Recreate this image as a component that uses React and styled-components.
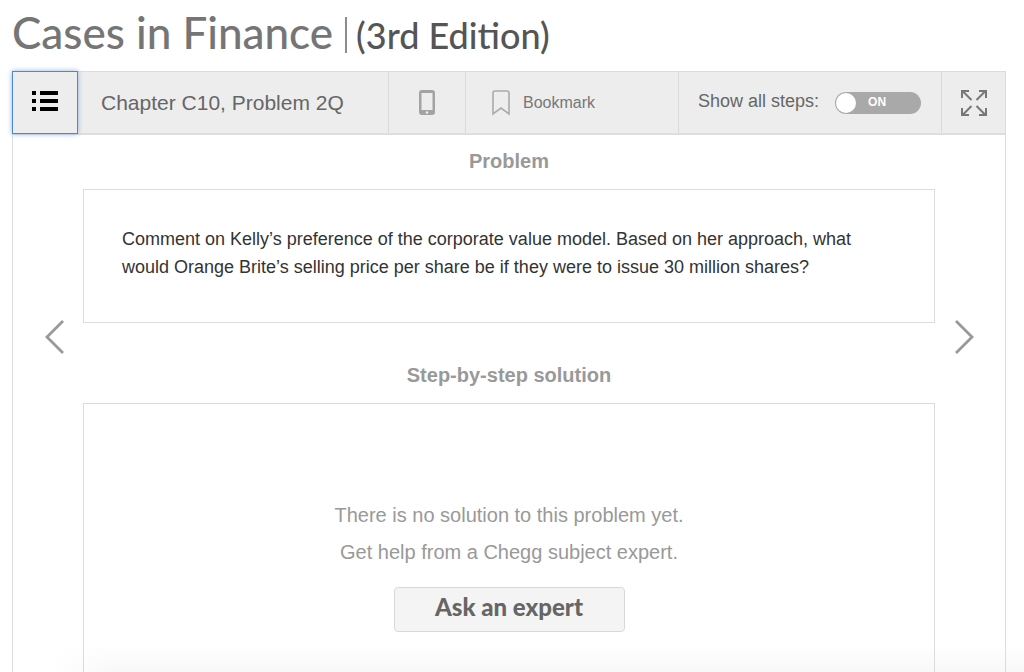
import { useState } from "react";
import styled, { createGlobalStyle } from "styled-components";

const GlobalStyle = createGlobalStyle`
  * {
    box-sizing: border-box;
  }

  body {
    margin: 0;
    background-color: #fff;
    font-family: "Liberation Sans", Arial, sans-serif;
  }

  button {
    padding: 0;
    border: none;
    background: none;
    font-family: inherit;
    cursor: pointer;
  }
`;

const Page = styled.div`
  display: flex;
  flex-direction: column;
  min-height: 100vh;
  padding: 0 18px 0 12px;
  background:
    linear-gradient(to right, #fff 50px, transparent 120px),
    linear-gradient(to top, #f8f8f8, #fff 28px);
`;

const Title = styled.h1`
  display: flex;
  align-items: baseline;
  height: 71px;
  margin: 0;
  font-family: Lato, sans-serif;
  font-size: 44px;
  font-weight: 500;
  line-height: 64px;
  color: #757575;
`;

const Edition = styled.span`
  margin-left: 12px;
  padding-left: 9px;
  border-left: 2px solid #8c8c8c;
  font-size: 36px;
  line-height: 36px;
  color: #555;
`;

const Viewer = styled.main`
  display: flex;
  flex-direction: column;
  flex: 1;
  border: 1px solid #dcdcdc;
  border-bottom: none;
`;

const Toolbar = styled.div`
  display: flex;
  height: 63px;
  border-bottom: 2px solid #dedede;
  background-color: #ededed;
`;

const ToolButton = styled.button`
  display: flex;
  align-items: center;
  justify-content: ${props => props.$start ? "flex-start" : "center"};
  gap: 13px;
  width: ${props => props.$width};
  padding-left: ${props => props.$start ? "26px" : "0"};
  border-left: 1px solid #dadada;
  font-size: 16px;
  color: #777;
`;

const ListButton = styled.button`
  display: flex;
  align-items: center;
  justify-content: center;
  width: 64px;
  height: 61px;
  padding-bottom: 3px;
  outline: 1px solid #4a8ad0;
  box-shadow: 0 0 5px 1px #8db4e0;
`;

const Chapter = styled.div`
  flex: 1;
  padding-left: 24px;
  font-size: 21px;
  line-height: 62px;
  color: #666;
`;

const Steps = styled.label`
  display: flex;
  align-items: center;
  gap: 16px;
  width: 263px;
  padding-left: 19px;
  border-left: 1px solid #dadada;
  font-size: 18px;
  line-height: 24px;
  color: #666;

  span {
    padding-bottom: 4px;
  }
`;

const Switch = styled.input`
  appearance: none;
  display: flex;
  align-items: center;
  width: 86px;
  height: 22px;
  margin: 0;
  padding: 0 1px;
  border-radius: 11px;
  background-color: #a9a9a9;
  cursor: pointer;

  &::before {
    content: "";
    width: 20px;
    height: 20px;
    border-radius: 50%;
    background-color: #fff;
  }

  &::after {
    content: "${props => props.checked ? "ON" : "OFF"}";
    margin-left: 12px;
    padding-bottom: 2px;
    font: bold 12px/16px "Liberation Sans", Arial, sans-serif;
    color: #fff;
  }
`;

const Content = styled.div`
  display: grid;
  grid-template-columns: 70px 1fr 70px;
  flex: 1;
`;

const Arrow = styled.button`
  display: flex;
  align-self: start;
  justify-content: center;
  margin-top: 184px;
  padding: ${props => props.$next ? "0 12px 0 0" : "0 0 0 14px"};
`;

const Column = styled.div`
  display: flex;
  flex-direction: column;
`;

const Heading = styled.h2`
  margin: 0;
  padding: 14px 0 16px;
  font-size: 20px;
  font-weight: 700;
  line-height: 24px;
  text-align: center;
  color: #999;
`;

const ProblemCard = styled.section`
  margin-bottom: 26px;
  padding: 35px 38px 41px;
  border: 1px solid #dcdcdc;
  font-size: 18px;
  line-height: 28px;
  color: #333;

  p {
    margin: 0;
  }
`;

const SolutionCard = styled.section`
  display: flex;
  flex-direction: column;
  align-items: center;
  flex: 1;
  padding: 93px 38px 40px;
  border: 1px solid #dcdcdc;
  border-bottom: none;
  font-size: 20px;
  line-height: 37px;
  text-align: center;
  color: #999;

  p {
    margin: 0;
  }
`;

const AskButton = styled.button`
  width: 231px;
  height: 45px;
  margin-top: 16px;
  padding-bottom: 6px;
  border: 1px solid #d8d8d8;
  border-radius: 4px;
  background-color: #f4f4f4;
  font-family: Lato, sans-serif;
  font-size: 24px;
  font-weight: 900;
  color: #666;
`;

const ListIcon = () => (
  <svg width="26" height="22" viewBox="0 0 26 22" fill="#000">
    <path d="M0 1h4v4H0zM8 1h18v4H8zM0 9h4v4H0zM8 9h18v4H8zM0 17h4v4H0zM8 17h18v4H8z" />
  </svg>
);

const PhoneIcon = () => (
  <svg width="16" height="25" viewBox="0 0 16 25">
    <rect width="16" height="25" rx="3" fill="#a3a3a3" />
    <rect x="2.500" y="3" width="11" height="17" fill="#ededed" />
    <circle cx="8" cy="22.5" r="1.3" fill="#ededed" />
  </svg>
);

const BookmarkIcon = () => (
  <svg width="18" height="26" viewBox="0 0 18 26" fill="none" stroke="#aaa" strokeWidth="1.6">
    <path d="M1 24V3q0-2 2-2h12q2 0 2 2v21l-8-6z" />
  </svg>
);

const ExpandIcon = () => (
  <svg width="26" height="26" viewBox="0 0 26 26" fill="none" stroke="#777" strokeWidth="2">
    <path d="M10.500 10L2 1.500M15.500 10L24 1.500M10.500 16L2 24.500M15.500 16L24 24.500" />
    <path d="M1 8V1h7M18 1h7v7M1 18v7h7M25 18v7h-7" />
  </svg>
);

const Chevron = ({ points }) => (
  <svg width="20" height="36" viewBox="0 0 20 36" fill="none" stroke="#999" strokeWidth="2.800">
    <polyline points={points} />
  </svg>
);

const App = () => {
  const [showAll, setShowAll] = useState(true);

  return (
    <Page>
      <GlobalStyle />
      <Title>
        Cases in Finance
        <Edition>(3rd Edition)</Edition>
      </Title>
      <Viewer>
        <Toolbar>
          <ListButton aria-label="Table of contents">
            <ListIcon />
          </ListButton>
          <Chapter>Chapter C10, Problem 2Q</Chapter>
          <ToolButton $width="77px" aria-label="Send to phone">
            <PhoneIcon />
          </ToolButton>
          <ToolButton $width="213px" $start>
            <BookmarkIcon />
            Bookmark
          </ToolButton>
          <Steps>
            <span>Show all steps:</span>
            <Switch
              type="checkbox"
              role="switch"
              checked={showAll}
              onChange={() => setShowAll(!showAll)}
            />
          </Steps>
          <ToolButton $width="64px" aria-label="Full screen">
            <ExpandIcon />
          </ToolButton>
        </Toolbar>
        <Content>
          <Arrow aria-label="Previous problem">
            <Chevron points="18,2 2,18 18,34" />
          </Arrow>
          <Column>
            <Heading>Problem</Heading>
            <ProblemCard>
              <p>
                Comment on Kelly’s preference of the corporate value model. Based on her approach, what
                would Orange Brite’s selling price per share be if they were to issue 30 million shares?
              </p>
            </ProblemCard>
            <Heading>Step-by-step solution</Heading>
            <SolutionCard>
              <p>There is no solution to this problem yet.</p>
              <p>Get help from a Chegg subject expert.</p>
              <AskButton>Ask an expert</AskButton>
            </SolutionCard>
          </Column>
          <Arrow $next aria-label="Next problem">
            <Chevron points="2,2 18,18 2,34" />
          </Arrow>
        </Content>
      </Viewer>
    </Page>
  );
};

export default App;
